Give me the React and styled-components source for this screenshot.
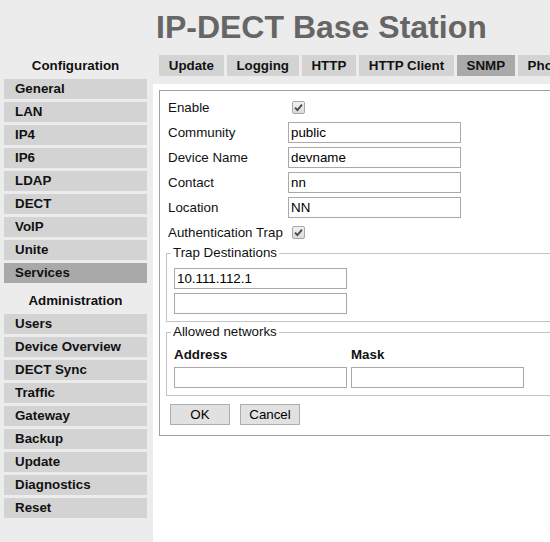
import React from "react";
import styled, { createGlobalStyle } from "styled-components";

const GlobalStyle = createGlobalStyle`
  html, body {
    margin: 0;
    padding: 0;
    background: #ececec;
    overflow: hidden;
  }

  body {
    font-family: "Liberation Sans", Arial, sans-serif;
    font-size: 10pt;
    color: #111;
  }
`;

const Page = styled.div`
  display: grid;
  grid-template-columns: 153px 1fr;
  min-height: 100vh;
  width: 550px;
`;

const Sidebar = styled.nav`
  padding: 56px 0 0 4px;
  display: flex;
  flex-direction: column;
  gap: 3px;
`;

const SectionTitle = styled.div`
  width: 143px;
  height: 20px;
  line-height: 20px;
  text-align: center;
  font-weight: bold;
  margin-top: ${props => props.spaced ? "5px" : "0"};
`;

const NavItem = styled.div`
  width: 143px;
  height: 20px;
  line-height: 20px;
  padding-left: 11px;
  box-sizing: border-box;
  font-weight: bold;
  background: ${props => props.active ? "#a9a9a9" : "#d3d3d3"};
`;

const Main = styled.main`
  display: flex;
  flex-direction: column;
  min-width: 0;
  overflow: hidden;
`;

const Header = styled.header`
  height: 84px;
  padding: 11px 0 0 3px;
  box-sizing: border-box;
`;

const Title = styled.h1`
  margin: 0;
  font-size: 32px;
  line-height: 32px;
  font-weight: bold;
  color: #666;
  white-space: nowrap;
`;

const Tabs = styled.div`
  display: flex;
  gap: 3px;
  margin: 12px 0 0 3px;
  white-space: nowrap;
`;

const Tab = styled.div`
  height: 21px;
  line-height: 21px;
  padding: 0 9.75px;
  font-weight: bold;
  background: ${props => props.active ? "#a9a9a9" : "#d3d3d3"};
`;

const Content = styled.section`
  flex: 1;
  background: #fff;
  padding: 6px 0 0 6px;
`;

const Panel = styled.div`
  width: 440px;
  border: 1px solid #a0a0a0;
  padding: 6px 0 10px 0;
`;

const FormGrid = styled.div`
  display: grid;
  grid-template-columns: 120px 173px;
  grid-auto-rows: 21px;
  row-gap: 4px;
  padding-left: 8px;
  align-items: center;
`;

const Input = styled.input`
  box-sizing: border-box;
  width: 173px;
  height: 21px;
  border: 1px solid #a9a9a9;
  padding: 0 2px;
  margin: 0;
  font-family: inherit;
  font-size: 10pt;
  color: #000;
  outline: none;
`;

const CheckBox = styled.span`
  display: inline-flex;
  align-items: center;
  justify-content: center;
  width: 11px;
  height: 11px;
  margin-left: 4px;
  border: 1px solid #a8a8a8;
  border-radius: 2px;
  background: linear-gradient(#f2f2f2, #dadada);
`;

const Fieldset = styled.fieldset`
  margin: ${props => props.top || 2}px 0 0 6px;
  border: 1px solid #c4c4c4;
  padding: 7px 7px 7px 7px;
  min-width: 0;
`;

const Legend = styled.legend`
  padding: 0 2px;
  margin-left: -3px;
  font-size: 10pt;
  line-height: 16px;
`;

const Stack = styled.div`
  display: flex;
  flex-direction: column;
  gap: 4px;
`;

const NetGrid = styled.div`
  display: grid;
  grid-template-columns: 173px 173px;
  column-gap: 4px;
  row-gap: 4px;
`;

const ColHead = styled.div`
  font-weight: bold;
  line-height: 16px;
`;

const Buttons = styled.div`
  display: flex;
  gap: 10px;
  margin: 8px 0 0 10px;
`;

const Button = styled.button`
  width: 60px;
  height: 21px;
  padding: 0;
  border: 1px solid #adadad;
  background: #e1e1e1;
  font-family: inherit;
  font-size: 10pt;
  color: #000;
`;

const Check = () => (
  <CheckBox>
    <svg width="9" height="9" viewBox="0 0 9 9">
      <path d="M1 4.6 L3.4 7 L8 1.6" fill="none" stroke="#4a4a4a" strokeWidth="1.9" />
    </svg>
  </CheckBox>
);

const config = ["General", "LAN", "IP4", "IP6", "LDAP", "DECT", "VoIP", "Unite", "Services"];
const admin = ["Users", "Device Overview", "DECT Sync", "Traffic", "Gateway", "Backup", "Update", "Diagnostics", "Reset"];
const tabs = ["Update", "Logging", "HTTP", "HTTP Client", "SNMP", "Phonebook"];

export default function App() {
  return (
    <Page>
      <GlobalStyle />
      <Sidebar>
        <SectionTitle>Configuration</SectionTitle>
        {config.map(name => (
          <NavItem key={name} active={name === "Services"}>{name}</NavItem>
        ))}
        <SectionTitle spaced>Administration</SectionTitle>
        {admin.map(name => (
          <NavItem key={name}>{name}</NavItem>
        ))}
      </Sidebar>
      <Main>
        <Header>
          <Title>IP-DECT Base Station</Title>
          <Tabs>
            {tabs.map(t => (
              <Tab key={t} active={t === "SNMP"}>{t}</Tab>
            ))}
          </Tabs>
        </Header>
        <Content>
          <Panel>
            <FormGrid>
              <span>Enable</span>
              <span><Check /></span>
              <span>Community</span>
              <Input defaultValue="public" />
              <span>Device Name</span>
              <Input defaultValue="devname" />
              <span>Contact</span>
              <Input defaultValue="nn" />
              <span>Location</span>
              <Input defaultValue="NN" />
              <span>Authentication Trap</span>
              <span><Check /></span>
            </FormGrid>
            <Fieldset>
              <Legend>Trap Destinations</Legend>
              <Stack>
                <Input defaultValue="10.111.112.1" />
                <Input defaultValue="" />
              </Stack>
            </Fieldset>
            <Fieldset top={2}>
              <Legend>Allowed networks</Legend>
              <NetGrid>
                <ColHead>Address</ColHead>
                <ColHead>Mask</ColHead>
                <Input defaultValue="" />
                <Input defaultValue="" />
              </NetGrid>
            </Fieldset>
            <Buttons>
              <Button>OK</Button>
              <Button>Cancel</Button>
            </Buttons>
          </Panel>
        </Content>
      </Main>
    </Page>
  );
}
